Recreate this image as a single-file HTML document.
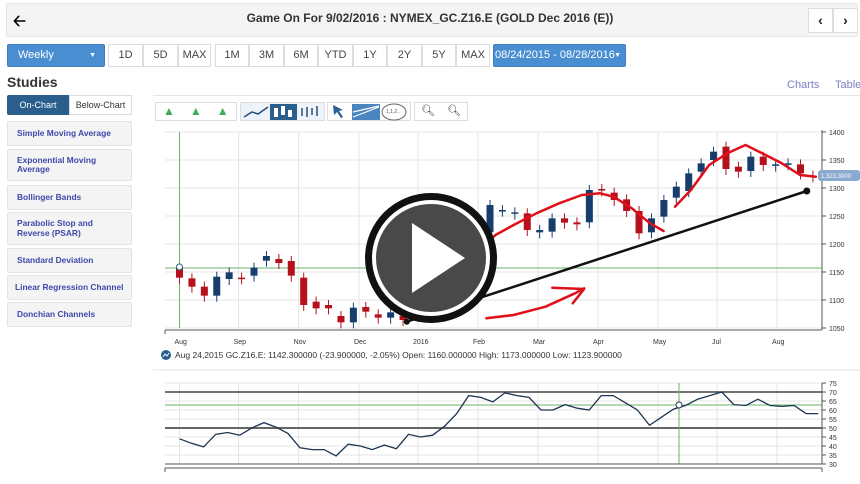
<!DOCTYPE html>
<html><head><meta charset="utf-8">
<style>
*{box-sizing:border-box;margin:0;padding:0}
body{width:860px;height:484px;overflow:hidden;background:#fff;font-family:"Liberation Sans",sans-serif;position:relative}
.a{position:absolute}
.hdr{left:6px;top:3px;width:852px;height:34px;background:#f4f4f4;border:1px solid #e6e6e6;border-radius:2px}
.title{left:0;top:11px;width:860px;text-align:center;font-weight:bold;font-size:12px;color:#333}
.nav{top:8px;width:25px;height:25px;background:#fff;border:1px solid #ddd;font-weight:bold;font-size:14px;text-align:center;line-height:23px;color:#222}
.btn{top:44px;height:23px;border:1px solid #ddd;background:#fff;font-size:11px;color:#444;text-align:center;line-height:21px}
.blue{background:#4a8ed2;color:#fff;border-color:#3f80c0;text-align:left;padding-left:10px;border-radius:2px}
.item{left:7px;width:125px;background:#f4f4f5;border:1px solid #e4e4e6;border-radius:2px;font-size:8.4px;font-weight:bold;color:#3d48a8;padding:0 9px;display:flex;align-items:center;line-height:9.5px;white-space:normal}
.tb{top:102px;height:19px;border:1px solid #ddd;background:#fff}
</style></head><body>
<div class="a hdr"></div>
<div class="a" style="left:13px;top:10px;font-size:16px;font-weight:bold">&#129120;</div>
<div class="a title">Game On For 9/02/2016 : NYMEX_GC.Z16.E (GOLD Dec 2016 (E))</div>
<div class="a nav" style="left:808px">&#8249;</div>
<div class="a nav" style="left:833px">&#8250;</div>

<div class="a btn blue" style="left:7px;width:98px">Weekly<span style="position:absolute;right:8px;font-size:7px">&#9660;</span></div>
<div class="a btn" style="left:108px;width:35px">1D</div>
<div class="a btn" style="left:143px;width:35px">5D</div>
<div class="a btn" style="left:178px;width:33px">MAX</div>
<div class="a btn" style="left:215px;width:34px">1M</div>
<div class="a btn" style="left:249px;width:35px">3M</div>
<div class="a btn" style="left:284px;width:34px">6M</div>
<div class="a btn" style="left:318px;width:35px">YTD</div>
<div class="a btn" style="left:353px;width:34px">1Y</div>
<div class="a btn" style="left:387px;width:35px">2Y</div>
<div class="a btn" style="left:422px;width:34px">5Y</div>
<div class="a btn" style="left:456px;width:34px">MAX</div>
<div class="a btn blue" style="left:493px;width:133px;padding-left:1px">08/24/2015 - 08/28/2016<span style="position:absolute;right:4px;font-size:7px">&#9660;</span></div>

<div class="a" style="left:7px;top:74px;font-size:14px;font-weight:bold;color:#333">Studies</div>
<div class="a" style="left:787px;top:79px;font-size:11px;color:#7b80c0">Charts</div>
<div class="a" style="left:835px;top:79px;font-size:11px;color:#7b80c0">Table</div>
<div class="a" style="left:153px;top:95px;width:707px;border-top:1px solid #e4e4e4"></div>

<div class="a" style="left:7px;top:95px;width:62px;height:20px;background:#2a5e8c;color:#fff;font-size:9px;text-align:center;line-height:20px;border-radius:2px 0 0 2px">On-Chart</div>
<div class="a" style="left:69px;top:95px;width:63px;height:20px;background:#fff;border:1px solid #ddd;color:#333;font-size:9px;text-align:center;line-height:18px">Below-Chart</div>
<div class="a item" style="top:121px;height:25px">Simple Moving Average</div>
<div class="a item" style="top:149px;height:32px">Exponential Moving Average</div>
<div class="a item" style="top:185px;height:25px">Bollinger Bands</div>
<div class="a item" style="top:212px;height:33px">Parabolic Stop and Reverse (PSAR)</div>
<div class="a item" style="top:248px;height:25px">Standard Deviation</div>
<div class="a item" style="top:275px;height:25px;white-space:nowrap;padding:0 7px">Linear Regression Channel</div>
<div class="a item" style="top:302px;height:25px">Donchian Channels</div>

<div class="a tb" style="left:155px;width:82px"></div>
<div class="a" style="left:163px;top:104px;color:#3cae5a;font-size:12px;letter-spacing:15px">&#9650;&#9650;&#9650;</div>
<div class="a tb" style="left:240px;width:85px;background:#eef3fa"></div>
<svg class="a" style="left:240px;top:102px" width="85" height="19"><polyline points="4,15 12,10 18,12 28,5" fill="none" stroke="#27507a" stroke-width="1.5"/><rect x="30" y="2" width="27" height="16" fill="#2a5e8c"/><rect x="34" y="6" width="4" height="9" fill="#fff"/><rect x="41" y="4" width="4" height="9" fill="#fff"/><rect x="48" y="8" width="4" height="7" fill="#fff"/><path d="M62 14v-8M67 15v-10M72 13v-7M77 14v-10" stroke="#27507a" stroke-width="1.5"/></svg>
<div class="a tb" style="left:327px;width:84px"></div>
<svg class="a" style="left:327px;top:102px" width="84" height="19"><path d="M6 3l10 5-4 1 4 6-2 1-4-6-3 3z" fill="#2a6096"/><rect x="25" y="2" width="28" height="16" fill="#4a85c0"/><path d="M26 15l26-10M26 10l26-6" stroke="#fff" stroke-width="1.2"/><ellipse cx="67" cy="10" rx="12" ry="8" fill="#fff" stroke="#666"/><text x="59" y="11" font-size="5" fill="#555">1,1,2..</text></svg>
<div class="a tb" style="left:414px;width:54px"></div>
<div class="a" style="left:421px;top:104px;font-size:11px;color:#333">&#x1F50D;&#xFE0E;</div>
<div class="a" style="left:447px;top:104px;font-size:11px;color:#333">&#x1F50D;&#xFE0E;</div>

<svg class="a" id="c" style="left:0;top:0" width="860" height="484"></svg>
<script>
var s=document.getElementById('c'),h='';
function L(x1,y1,x2,y2,c,w){h+='<line x1="'+x1+'" y1="'+y1+'" x2="'+x2+'" y2="'+y2+'" stroke="'+c+'" stroke-width="'+(w||1)+'"/>';}
function T(x,y,t,a){h+='<text x="'+x+'" y="'+y+'" font-size="7" fill="#333" font-family="Liberation Sans" '+(a||'')+'>'+t+'</text>';}
var gx=[179.5,238.6,298.6,359,418,478,538,598,658,717,777],ml=['Aug','Sep','Nov','Dec','2016','Feb','Mar','Apr','May','Jul','Aug'];
gx.forEach(function(x,i){L(x,132,x,328,'#e6e6e6');L(x,383,x,464,'#e6e6e6');T(x-5,344,ml[i]);});
for(var p=1400;p>=1050;p-=50){var y=132+(1400-p)*0.56;L(165,y,822,y,'#e6e6e6');L(822,y,826,y,'#555');T(829,y+3,p);}
L(822,130,822,330,'#555');L(165,330,822,330,'#555');L(165,330,165,334,'#555');
L(165,268,822,268,'#6ab36a');L(179.5,132,179.5,328,'#6ab36a');
var cs=[[430,458,1],[460,485,1],[485,512,1],[455,512,0],[442,462,0],[458,460,1],[428,452,0],[393,407,0],[402,414,1],[408,452,1],[458,540,1],[530,550,1],[540,550,1],[573,592,1],[548,592,0],[546,560,1],[568,578,1],[562,578,0],[573,585,1],[525,570,0],[515,540,1],[500,545,0],[428,492,0],[295,395,0],[295,320,1],[240,322,0],[255,257,0],[262,266,0],[265,315,1],[315,322,0],[280,320,0],[280,293,1],[292,298,1],[195,292,0],[192,196,1],[203,225,1],[223,258,1],[258,325,1],[280,322,0],[225,275,0],[185,218,0],[145,198,0],[115,140,0],[80,105,0],[65,132,1],[125,140,1],[95,138,0],[95,120,1],[118,122,0],[115,118,0],[118,145,1],[152,154,1]];
cs.forEach(function(c,i){var x=179.5+i*12.42,t=125+c[0]/3,b=125+c[1]/3,col=c[2]?'#b5101c':'#173d6c';L(x,t-5,x,b+6,col);h+='<rect x="'+(x-3.5)+'" y="'+t+'" width="7" height="'+Math.max(1.5,b-t)+'" fill="'+col+'"/>';});
function P(a,c,w){var q=a.map(function(v){return (150+v[0]/2.2).toFixed(1)+','+(125+v[1]/3).toFixed(1)}).join(' ');h+='<polyline points="'+q+'" fill="none" stroke="'+c+'" stroke-width="'+w+'" stroke-linejoin="round" stroke-linecap="round"/>';}
P([[590,560],[650,480],[700,400],[760,330],[800,300],[850,265],[900,235],[950,210],[990,205],[1020,215],[1060,250],[1100,295],[1130,318]],'#e0101a',2.5);
P([[1155,245],[1190,195],[1230,120],[1270,85],[1310,60],[1340,80],[1390,115],[1430,150],[1465,155]],'#e0101a',2.5);
P([[565,590],[1445,198]],'#111',2.5);
P([[740,580],[800,570],[870,545],[935,505],[955,490]],'#e0101a',2.5);
P([[885,488],[955,492],[930,535]],'#e0101a',2.5);
h+='<circle cx="406.8" cy="321.7" r="3" fill="#111"/><circle cx="806.8" cy="191" r="3.5" fill="#111"/><circle cx="179.5" cy="267" r="3" fill="#fff" stroke="#2a5e8c"/>';
h+='<rect x="818" y="170" width="42" height="11" rx="3" fill="#8aa9cf"/><text x="821" y="178" font-size="6" fill="#fff" font-family="Liberation Sans">1,323.3000</text>';
h+='<circle cx="166" cy="355" r="5" fill="#2a5e8c"/><path d="M163 357l2-3 2 2 2-3" stroke="#fff" fill="none"/>';
h+='<text x="175" y="358" font-size="8.5" fill="#333" font-family="Liberation Sans">Aug 24,2015 GC.Z16.E: 1142.300000 (-23.900000, -2.05%) Open: 1160.000000 High: 1173.000000 Low: 1123.900000</text>';
L(153,370,860,370,'#e4e4e4');
for(var v=75;v>=30;v-=5){var y=383+(75-v)*1.8;L(165,y,822,y,'#e4e4e4');L(822,y,826,y,'#555');T(829,y+3,v);}
L(165,392,822,392,'#444',1.5);L(165,428,822,428,'#666',2);L(165,405,822,405,'#6ab36a');L(679,383,679,464,'#6ab36a');
L(822,383,822,464,'#555');L(165,464,822,464,'#555');L(165,468,822,468,'#555');L(165,468,165,472,'#555');L(822,468,822,472,'#555');
var r=[44,41.5,39.5,46.5,47.5,46,50,53,50.5,47,39,38,38,34.5,41,40,38,40.5,38.5,46.5,45,46,51,58,68,67,64.5,69.5,68,67,60,60,63,61,60,68,68,64,60,51.5,56,60.5,62.5,66,68,70,63,62.5,66,62.5,62,62.5,58,58];
h+='<polyline fill="none" stroke="#1d3550" stroke-width="1.3" points="'+r.map(function(v,i){return (179.5+i*12.05).toFixed(1)+','+(383+(75-v)*1.8).toFixed(1)}).join(' ')+'"/>';
h+='<circle cx="679" cy="405" r="3" fill="#fff" stroke="#1d3550"/>';
h+='<ellipse cx="431" cy="258" rx="66" ry="65" fill="#111"/><ellipse cx="431" cy="258" rx="59" ry="58" fill="#fff"/><ellipse cx="431" cy="258" rx="55" ry="54" fill="#3a3a3a" fill-opacity="0.92"/><polygon points="412,223 465,258 412,293" fill="#fff"/>';
s.innerHTML=h;
</script>
</body></html>
